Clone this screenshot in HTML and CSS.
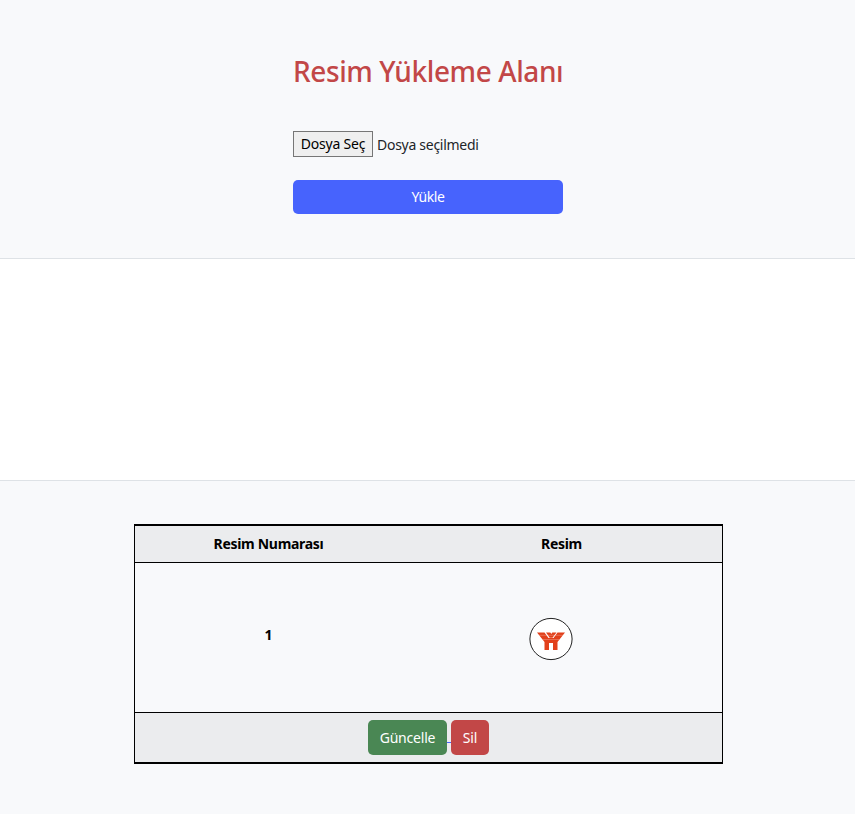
FILE: index.html
```html
<!DOCTYPE html>
<html lang="tr">
<head>
<meta charset="utf-8">
<title>Resim Yükleme Alanı</title>
<link rel="stylesheet" href="styles.css">
</head>
<body>
<section class="upload">
  <form class="form">
    <h1>Resim Yükleme Alanı</h1>
    <div class="file"><button type="button" class="pick">Dosya Seç</button><span class="none">Dosya seçilmedi</span></div>
    <button type="button" class="submit">Yükle</button>
  </form>
</section>
<section class="list">
  <div class="table">
    <div class="row head"><div class="num">Resim Numarası</div><div class="pic">Resim</div></div>
    <div class="row body"><div class="num">1</div><div class="pic">
      <svg class="logo" width="44" height="44" viewBox="0 0 44 44"><ellipse cx="22" cy="22" rx="21.1" ry="20.6" fill="#fff" stroke="#222" stroke-width="1"/><g fill="#e2401b"><path d="M8 15.500h7.500l4 5.500h5l4-5.500h7.500l-7.500 9.500v8h-4.500v-7h-4v7h-4.500v-8z"/><path d="M17 15.500h4.300l1 1.500 1-1.500h4.200l-4 5.200h-2.800z"/></g><path d="M8.500 18.300h27M14 22.500h16" stroke="#fff" stroke-width=".4" opacity=".6"/></svg>
    </div></div>
    <div class="row foot"><button type="button" class="btn green">Güncelle</button><span class="gap"></span><button type="button" class="btn red">Sil</button></div>
  </div>
</section>
</body>
</html>
```
FILE: styles.css
```css
* { box-sizing: border-box; }
body { margin: 0; background: #fff; color: #000; font: 14px/21px "Noto Sans", sans-serif; }
button { font: inherit; padding: 0; }
.upload { height: 259px; background: #f8f9fb; border-bottom: 1px solid #dee2e6; }
.form { width: 270px; margin: 0 auto 0 293px; padding-top: 54px; }
h1 { margin: 0; color: #c24747; font-size: 28px; line-height: 35px; font-weight: 500; letter-spacing: -.41px; white-space: nowrap; }
.file { display: flex; align-items: center; margin-top: 42px; height: 26px; }
.pick { width: 80px; height: 26px; border: 1px solid #767676; background: #efefef; color: #000; letter-spacing: -.2px; padding-bottom: 1px; }
.none { margin-left: 4px; color: #212529; letter-spacing: -.28px; }
.submit { display: block; width: 270px; height: 34px; margin-top: 23px; padding-bottom: 1px; border: 0; border-radius: 5px; background: #4763fd; color: #fff; letter-spacing: -.4px; }
.list { height: 334px; margin-top: 221px; padding-top: 43px; background: #f8f9fb; border-top: 1px solid #dee2e6; }
.table { width: 589px; height: 240px; margin-left: 134px; border: 1px solid #000; border-width: 2px 1px; }
.row { display: flex; align-items: center; }
.head { height: 37px; padding-bottom: 2px; background: #ebecee; border-bottom: 1px solid #000; font-weight: 700; letter-spacing: -.31px; }
.body { height: 150px; border-bottom: 1px solid #000; font-weight: 700; }
.body .num { padding-bottom: 6px; }
.num { width: 267px; text-align: center; }
.pic { width: 319px; text-align: center; }
.logo { display: block; margin: 2px 0 0 127px; }
.foot { height: 49px; justify-content: center; background: #ebecee; }
.btn { height: 35px; border: 0; border-radius: 5px; color: #fff; letter-spacing: -.2px; }
.green { width: 79px; background: #4a8754; }
.red { width: 38px; background: #c24747; }
.gap { width: 4px; height: 11px; border-bottom: 1px solid #4763fd; }
```
